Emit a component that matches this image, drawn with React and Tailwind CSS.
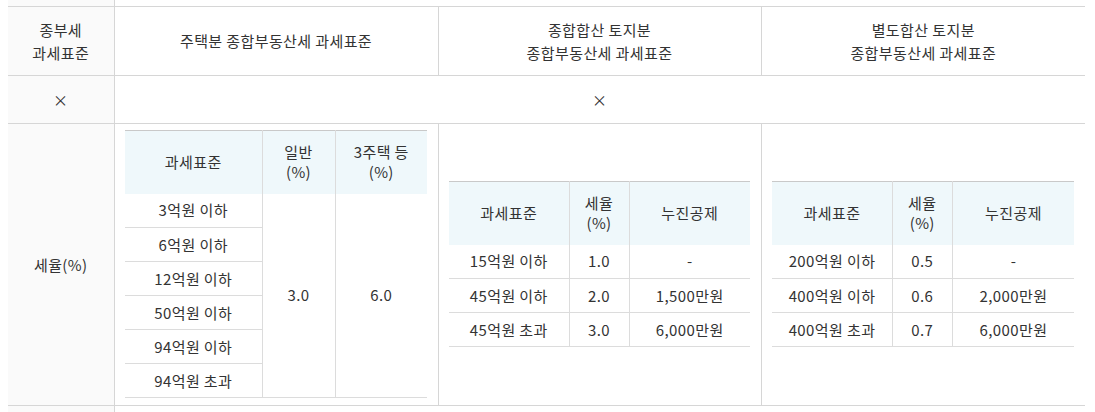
const line = 'border-[#d6d6d6]';

const InnerTable = ({ cols, head, rows, children }) => (
    <table className="mx-auto table-fixed border-collapse text-[15px] leading-[20px] tracking-[0.4px] text-[#333]" style={{ width: cols.reduce((a, b) => a + b, 0) }}>
        <colgroup>
            {cols.map((w, i) => (
                <col key={i} style={{ width: w }} />
            ))}
        </colgroup>
        <thead>
            <tr className="h-[63px] border-t border-[#c9c9c9] bg-[#eff8fb]">
                {head.map((h, i) => (
                    <th
                        key={i}
                        className={`p-0 text-center align-middle font-normal ${i > 0 ? 'border-l border-[#dcdcdc]' : ''}`}
                    >
                        {h.map((t, j) => (
                            <div key={j}>{t}</div>
                        ))}
                    </th>
                ))}
            </tr>
        </thead>
        <tbody>{children || rows.map((r, i) => (
            <tr key={i} className="h-[34px] border-b border-[#dcdcdc]">
                {r.map((c, j) => (
                    <td key={j} className={`p-0 text-center align-middle ${j > 0 ? 'border-l border-[#dcdcdc]' : ''}`}>
                        {c}
                    </td>
                ))}
            </tr>
        ))}</tbody>
    </table>
);

const houseRows = ['3억원 이하', '6억원 이하', '12억원 이하', '50억원 이하', '94억원 이하', '94억원 초과'];

const App = () => {
    return (
        <div
            className="h-[412px] w-[1095px] overflow-hidden bg-white pl-2"
            style={{ fontFamily: '"Noto Sans CJK KR", "Noto Sans", sans-serif' }}
        >
            <table className="w-[1077px] table-fixed border-collapse text-[15px] leading-[23px] tracking-[0.4px] text-[#333]">
                <colgroup>
                    <col className="w-[106px]" />
                    <col className="w-[324px]" />
                    <col className="w-[323px]" />
                    <col className="w-[324px]" />
                </colgroup>
                <tbody>
                    <tr className={`h-[6px] border-b ${line}`}>
                        <td className={`border-r bg-[#fafafa] p-0 ${line}`} />
                        <td colSpan={3} className="p-0" />
                    </tr>
                    <tr className={`h-[69px] border-b ${line}`}>
                        <td className={`border-r bg-[#fafafa] p-0 text-center align-middle ${line}`}>
                            <div>종부세</div>
                            <div>과세표준</div>
                        </td>
                        <td className={`border-r p-0 text-center align-middle ${line}`}>주택분 종합부동산세 과세표준</td>
                        <td className={`border-r p-0 text-center align-middle ${line}`}>
                            <div>종합합산 토지분</div>
                            <div>종합부동산세 과세표준</div>
                        </td>
                        <td className="p-0 text-center align-middle">
                            <div>별도합산 토지분</div>
                            <div>종합부동산세 과세표준</div>
                        </td>
                    </tr>
                    <tr className={`h-[48px] border-b ${line}`}>
                        <td className={`border-r bg-[#fafafa] p-0 text-center align-middle ${line}`}>×</td>
                        <td colSpan={3} className="p-0 text-center align-middle">×</td>
                    </tr>
                    <tr className={`h-[282px] border-b ${line}`}>
                        <td className={`border-r bg-[#fafafa] p-0 text-center align-middle ${line}`}>세율(%)</td>
                        <td className={`border-r p-0 align-middle ${line}`}>
                            <InnerTable cols={[137, 73, 92]} head={[['과세표준'], ['일반', '(%)'], ['3주택 등', '(%)']]}>
                                {houseRows.map((r, i) => (
                                    <tr key={i} className="h-[34px] border-b border-[#dcdcdc]">
                                        <td className="p-0 text-center align-middle">{r}</td>
                                        {i === 0 && (
                                            <>
                                                <td rowSpan={6} className="border-l border-[#dcdcdc] p-0 text-center align-middle">3.0</td>
                                                <td rowSpan={6} className="border-l border-[#dcdcdc] p-0 text-center align-middle">6.0</td>
                                            </>
                                        )}
                                    </tr>
                                ))}
                            </InnerTable>
                        </td>
                        <td className={`border-r p-0 align-middle ${line}`}>
                            <InnerTable
                                cols={[120, 60, 121]}
                                head={[['과세표준'], ['세율', '(%)'], ['누진공제']]}
                                rows={[
                                    ['15억원 이하', '1.0', '-'],
                                    ['45억원 이하', '2.0', '1,500만원'],
                                    ['45억원 초과', '3.0', '6,000만원'],
                                ]}
                            />
                        </td>
                        <td className="p-0 align-middle">
                            <InnerTable
                                cols={[120, 60, 122]}
                                head={[['과세표준'], ['세율', '(%)'], ['누진공제']]}
                                rows={[
                                    ['200억원 이하', '0.5', '-'],
                                    ['400억원 이하', '0.6', '2,000만원'],
                                    ['400억원 초과', '0.7', '6,000만원'],
                                ]}
                            />
                        </td>
                    </tr>
                    <tr className="h-[7px]">
                        <td className={`border-r bg-[#fafafa] p-0 ${line}`} />
                        <td colSpan={3} className="p-0" />
                    </tr>
                </tbody>
            </table>
        </div>
    );
};

export default App;
